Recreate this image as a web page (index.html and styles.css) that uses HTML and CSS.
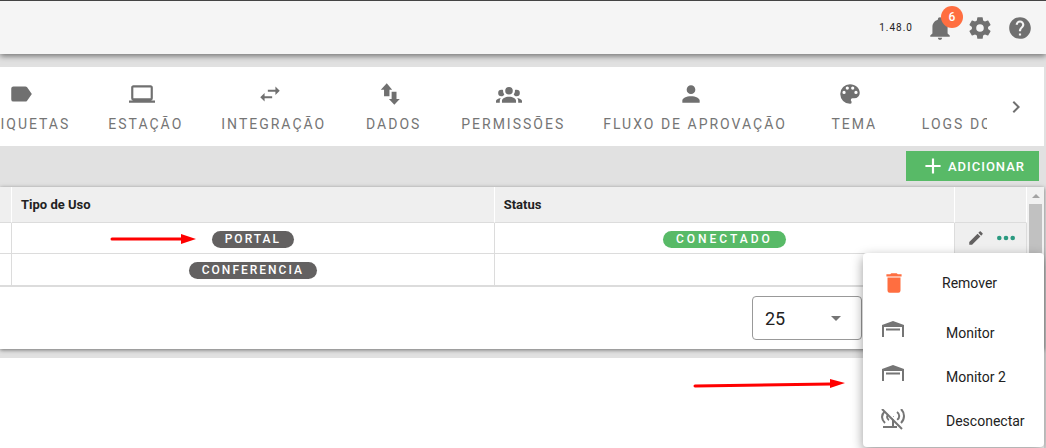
FILE: index.html
```html
<!DOCTYPE html>
<html lang="pt-BR">
<head>
    <meta charset="UTF-8">
    <meta name="viewport" content="width=device-width, initial-scale=1.0">
    <title>Configurações</title>
    <link rel="stylesheet" href="styles.css">
</head>
<body>
    <!-- Top bar -->
    <header class="topbar">
        <span class="version">1.48.0</span>
        <button class="icon-btn" aria-label="Notificações">
            <svg class="icon" viewBox="0 0 24 24"><path d="M21,19V20H3V19L5,17V11C5,7.9 7.03,5.17 10,4.29C10,4.19 10,4.1 10,4A2,2 0 0,1 12,2A2,2 0 0,1 14,4C14,4.1 14,4.19 14,4.29C16.97,5.17 19,7.9 19,11V17L21,19M14,21A2,2 0 0,1 12,23A2,2 0 0,1 10,21"/></svg>
            <span class="badge">6</span>
        </button>
        <button class="icon-btn" aria-label="Configurações">
            <svg class="icon" viewBox="0 0 24 24"><path d="M12,15.5A3.5,3.5 0 0,1 8.5,12A3.5,3.5 0 0,1 12,8.5A3.5,3.5 0 0,1 15.5,12A3.5,3.5 0 0,1 12,15.5M19.43,12.97C19.47,12.65 19.5,12.33 19.5,12C19.5,11.67 19.47,11.34 19.43,11L21.54,9.37C21.73,9.22 21.78,8.95 21.66,8.73L19.66,5.27C19.54,5.05 19.27,4.96 19.05,5.05L16.56,6.05C16.04,5.66 15.5,5.32 14.87,5.07L14.5,2.42C14.46,2.18 14.25,2 14,2H10C9.75,2 9.54,2.18 9.5,2.42L9.13,5.07C8.5,5.32 7.96,5.66 7.44,6.05L4.95,5.05C4.73,4.96 4.46,5.05 4.34,5.27L2.34,8.73C2.21,8.95 2.27,9.22 2.46,9.37L4.57,11C4.53,11.34 4.5,11.67 4.5,12C4.5,12.33 4.53,12.65 4.57,12.97L2.46,14.63C2.27,14.78 2.21,15.05 2.34,15.27L4.34,18.73C4.46,18.95 4.73,19.03 4.95,18.95L7.44,17.94C7.96,18.34 8.5,18.68 9.13,18.93L9.5,21.58C9.54,21.82 9.75,22 10,22H14C14.25,22 14.46,21.82 14.5,21.58L14.87,18.93C15.5,18.67 16.04,18.34 16.56,17.94L19.05,18.95C19.27,19.03 19.54,18.95 19.66,18.73L21.66,15.27C21.78,15.05 21.73,14.78 21.54,14.63L19.43,12.97Z"/></svg>
        </button>
        <button class="icon-btn" aria-label="Ajuda">
            <svg class="icon" viewBox="0 0 24 24"><path d="M15.07,11.25L14.17,12.17C13.45,12.89 13,13.5 13,15H11V14.5C11,13.39 11.45,12.39 12.17,11.67L13.41,10.41C13.78,10.05 14,9.55 14,9C14,7.89 13.1,7 12,7A2,2 0 0,0 10,9H8A4,4 0 0,1 12,5A4,4 0 0,1 16,9C16,9.88 15.64,10.67 15.07,11.25M13,19H11V17H13M12,2A10,10 0 0,0 2,12A10,10 0 0,0 12,22A10,10 0 0,0 22,12C22,6.47 17.5,2 12,2Z"/></svg>
        </button>
    </header>

    <main class="content">
        <!-- Tabs -->
        <nav class="tabs">
            <div class="tabs-view">
                <div class="tabs-track">
                    <button class="tab">
                        <svg class="icon" viewBox="0 0 24 24"><path d="M17.63,5.84C17.27,5.33 16.67,5 16,5H5A2,2 0 0,0 3,7V17A2,2 0 0,0 5,19H16C16.67,19 17.27,18.66 17.63,18.15L22,12L17.63,5.84Z"/></svg>
                        <span>ETIQUETAS</span>
                    </button>
                    <button class="tab">
                        <svg class="icon" viewBox="0 0 24 24"><path d="M4,6H20V16H4M20,18A2,2 0 0,0 22,16V6C22,4.89 21.1,4 20,4H4C2.89,4 2,4.89 2,6V16A2,2 0 0,0 4,18H0V20H24V18H20Z"/></svg>
                        <span>ESTAÇÃO</span>
                    </button>
                    <button class="tab">
                        <svg class="icon" viewBox="0 0 24 24"><path d="M21,9L17,5V8H10V10H17V13M7,11L3,15L7,19V16H14V14H7V11Z"/></svg>
                        <span>INTEGRAÇÃO</span>
                    </button>
                    <button class="tab">
                        <svg class="icon" viewBox="0 0 24 24"><path d="M9,2L3.500,8H6.500V14H11.500V8H14L9,2M13.500,10V16.500H11L16,22L21,16.500H18V10Z"/></svg>
                        <span>DADOS</span>
                    </button>
                    <button class="tab">
                        <svg class="icon" viewBox="0 0 24 24"><path d="M12,5.5A3.5,3.5 0 0,1 15.5,9A3.5,3.5 0 0,1 12,12.5A3.5,3.5 0 0,1 8.5,9A3.5,3.5 0 0,1 12,5.5M5,8C5.56,8 6.08,8.15 6.53,8.42C6.38,9.85 6.8,11.27 7.66,12.38C7.16,13.34 6.16,14 5,14A3,3 0 0,1 2,11A3,3 0 0,1 5,8M19,8A3,3 0 0,1 22,11A3,3 0 0,1 19,14C17.84,14 16.84,13.34 16.34,12.38C17.2,11.27 17.62,9.85 17.47,8.42C17.92,8.15 18.44,8 19,8M5.5,18.25C5.5,16.18 8.41,14.5 12,14.5C15.59,14.5 18.5,16.18 18.5,18.25V20H5.5V18.25M0,20V18.5C0,17.11 1.89,15.94 4.45,15.6C3.86,16.28 3.5,17.22 3.5,18.25V20H0M24,20H20.5V18.25C20.5,17.22 20.14,16.28 19.55,15.6C22.11,15.94 24,17.11 24,18.5V20Z"/></svg>
                        <span>PERMISSÕES</span>
                    </button>
                    <button class="tab">
                        <svg class="icon" viewBox="0 0 24 24"><path d="M12,4A4,4 0 0,1 16,8A4,4 0 0,1 12,12A4,4 0 0,1 8,8A4,4 0 0,1 12,4M12,14C16.42,14 20,15.79 20,18V20H4V18C4,15.79 7.58,14 12,14Z"/></svg>
                        <span>FLUXO DE APROVAÇÃO</span>
                    </button>
                    <button class="tab">
                        <svg class="icon" viewBox="0 0 24 24"><path d="M17.5,12A1.5,1.5 0 0,1 16,10.5A1.5,1.5 0 0,1 17.5,9A1.5,1.5 0 0,1 19,10.5A1.5,1.5 0 0,1 17.5,12M14.5,8A1.5,1.5 0 0,1 13,6.5A1.5,1.5 0 0,1 14.5,5A1.5,1.5 0 0,1 16,6.5A1.5,1.5 0 0,1 14.5,8M9.5,8A1.5,1.5 0 0,1 8,6.5A1.5,1.5 0 0,1 9.5,5A1.5,1.5 0 0,1 11,6.5A1.5,1.5 0 0,1 9.5,8M6.5,12A1.5,1.5 0 0,1 5,10.5A1.5,1.5 0 0,1 6.5,9A1.5,1.5 0 0,1 8,10.5A1.5,1.5 0 0,1 6.5,12M12,3A9,9 0 0,0 3,12A9,9 0 0,0 12,21A1.5,1.5 0 0,0 13.5,19.5C13.5,19.11 13.35,18.76 13.11,18.5C12.88,18.23 12.73,17.88 12.73,17.5A1.5,1.5 0 0,1 14.23,16H16A5,5 0 0,0 21,11C21,6.58 16.97,3 12,3Z"/></svg>
                        <span>TEMA</span>
                    </button>
                    <button class="tab">
                        <span>LOGS DO</span>
                    </button>
                </div>
            </div>
            <button class="tabs-next" aria-label="Próximo">
                <svg class="icon icon-md" viewBox="0 0 24 24"><path d="M8.59,16.58L13.17,12L8.59,7.41L10,6L16,12L10,18L8.59,16.58Z"/></svg>
            </button>
        </nav>

        <div class="toolbar">
            <button class="btn-add">
                <svg class="icon" viewBox="0 0 24 24"><path d="M19,13H13V19H11V13H5V11H11V5H13V11H19V13Z"/></svg>
                ADICIONAR
            </button>
        </div>

        <!-- Stations table -->
        <section class="panel">
            <div class="table-area">
                <table class="grid">
                    <colgroup>
                        <col class="col-first">
                        <col class="col-type">
                        <col>
                        <col class="col-actions">
                    </colgroup>
                    <thead>
                        <tr>
                            <th class="empty"></th>
                            <th>Tipo de Uso</th>
                            <th>Status</th>
                            <th class="empty"></th>
                        </tr>
                    </thead>
                    <tbody>
                        <tr>
                            <td></td>
                            <td><span class="chip">PORTAL</span></td>
                            <td><span class="chip chip-on">CONECTADO</span></td>
                            <td class="actions">
                                <div class="actions-row">
                                    <button class="icon-btn" aria-label="Editar">
                                        <svg class="icon icon-sm" viewBox="0 0 24 24"><path d="M20.71,7.04C21.1,6.65 21.1,6 20.71,5.63L18.37,3.29C18,2.9 17.35,2.9 16.96,3.29L15.12,5.12L18.87,8.87M3,17.25V21H6.75L17.81,9.93L14.06,6.18L3,17.25Z"/></svg>
                                    </button>
                                    <button class="icon-btn more" aria-label="Mais opções">
                                        <svg class="icon icon-sm" viewBox="0 0 18 18"><circle cx="2.300" cy="9" r="2.300"/><circle cx="9" cy="9" r="2.300"/><circle cx="15.700" cy="9" r="2.300"/></svg>
                                    </button>
                                </div>
                            </td>
                        </tr>
                        <tr>
                            <td></td>
                            <td><span class="chip">CONFERENCIA</span></td>
                            <td></td>
                            <td class="actions"></td>
                        </tr>
                    </tbody>
                </table>
                <div class="scrollbar">
                    <div class="scroll-up"></div>
                    <div class="scroll-thumb"></div>
                </div>

                <!-- Row menu -->
                <div class="menu">
                    <button class="menu-item menu-remove">
                        <svg class="icon" viewBox="0 0 24 24"><path d="M19,4H15.5L14.5,3H9.5L8.5,4H5V6H19M6,19A2,2 0 0,0 8,21H16A2,2 0 0,0 18,19V7H6V19Z"/></svg>
                        <span>Remover</span>
                    </button>
                    <button class="menu-item">
                        <svg class="icon icon-md" viewBox="0 0 24 24"><path d="M1,16V4L12,0L23,4V16H21V6H3V16ZM5,7.500H19V9.500H5Z"/></svg>
                        <span>Monitor</span>
                    </button>
                    <button class="menu-item">
                        <svg class="icon icon-md" viewBox="0 0 24 24"><path d="M1,16V4L12,0L23,4V16H21V6H3V16ZM5,7.500H19V9.500H5Z"/></svg>
                        <span>Monitor 2</span>
                    </button>
                    <button class="menu-item">
                        <svg class="icon icon-md icon-line" viewBox="0 0 24 24">
                            <path d="M4,2C0,6 0,10 4,14M8,4C5,7 6,10 8,11M20,0C24,4 24,10 20,14M16,3C19,5 19,9 16,11M12,7V17M2,18H16"/>
                            <path class="gap" d="M3,0L23,19"/>
                            <path d="M1,0L21,20"/>
                        </svg>
                        <span>Desconectar</span>
                    </button>
                </div>
            </div>

            <div class="pager">
                <div class="select-box">
                    <select aria-label="Itens por página">
                        <option>25</option>
                        <option>50</option>
                    </select>
                </div>
            </div>
        </section>

        <section class="panel-bottom"></section>
    </main>

    <!-- Red pointers -->
    <svg class="pointer pointer-type" viewBox="0 0 88 12"><path d="M2,6H74" /><polygon points="71,1 86,6 71,11"/></svg>
    <svg class="pointer pointer-menu" viewBox="0 0 154 12"><path d="M2,8L138,6" /><polygon points="137,1 152,5 137,10"/></svg>
</body>
</html>
```
FILE: styles.css
```css
/* Global Styles */
* {
    box-sizing: border-box;
}
body {
    display: flex;
    flex-direction: column;
    min-height: 100vh;
    margin: 0;
    font-family: Roboto, sans-serif;
    background-color: #e1e1e1;
    color: #222;
    position: relative;
}
button {
    font-family: inherit;
    border: none;
    background: none;
    padding: 0;
    cursor: pointer;
}
.icon {
    display: block;
    width: 26px;
    height: 26px;
    fill: #707070;
    flex: none;
}
.icon-md {
    width: 24px;
    height: 24px;
}
.icon-sm {
    width: 18px;
    height: 18px;
}
.icon-line {
    stroke: #757575;
    stroke-width: 2;
}
.icon-line .gap {
    stroke: #fff;
}

/* Top bar */
.topbar {
    display: flex;
    align-items: center;
    justify-content: flex-end;
    gap: 14px;
    height: 54px;
    padding-right: 13px;
    background-color: #f5f5f5;
    border-top: 1px solid #444;
    box-shadow: 0 2px 6px rgba(0, 0, 0, 0.5);
    z-index: 1;
}
.version {
    font-size: 10px;
    letter-spacing: 1px;
}
.icon-btn {
    position: relative;
}
.badge {
    position: absolute;
    top: -9px;
    right: -10px;
    width: 22px;
    height: 22px;
    border-radius: 50%;
    background-color: #ff6e40;
    color: #fff;
    font-size: 12px;
    font-weight: 500;
    line-height: 22px;
}

/* Tabs */
.content {
    display: flex;
    flex-direction: column;
    flex: 1;
    padding: 13px 2px 0 0;
}
.tabs {
    display: flex;
    height: 79px;
    background-color: #fff;
}
.tabs-view {
    flex: 1;
    min-width: 0;
    overflow: hidden;
}
.tabs-track {
    display: flex;
    height: 100%;
    margin-left: -39px; /* scrolled position */
}
.tab {
    display: flex;
    flex-direction: column;
    align-items: center;
    justify-content: flex-end;
    gap: 9px;
    flex: none;
    min-width: 97px;
    padding: 0 19px 14px;
    color: #757575;
    font-size: 14px;
    line-height: 16px;
    letter-spacing: 2px;
}
.tab .icon {
    margin-right: 8px;
}
.tabs-next {
    display: flex;
    align-items: center;
    justify-content: center;
    width: 57px;
}

.toolbar {
    display: flex;
    justify-content: flex-end;
    padding: 5px 5px 6px;
}
.btn-add {
    display: flex;
    align-items: center;
    gap: 2px;
    height: 30px;
    padding: 0 14px;
    background-color: #58ba67;
    color: #fff;
    font-size: 13px;
    font-weight: 500;
    letter-spacing: 1px;
}
.btn-add .icon {
    fill: #fff;
}

/* Table */
.panel {
    background-color: #fff;
    box-shadow: 0 1px 4px rgba(0, 0, 0, 0.5);
}
.table-area {
    display: flex;
    position: relative;
    border-bottom: 1px solid #dcdcdc;
}
.grid {
    flex: 1;
    table-layout: fixed;
    border-collapse: separate;
    border-spacing: 0;
}
.col-first {
    width: 12px;
}
.col-type {
    width: 47%;
}
.col-actions {
    width: 72px;
}
.grid th {
    height: 36px;
    padding: 0 9px;
    background-color: #efefef;
    border-right: 1px solid #fff;
    border-bottom: 1px solid #dcdcdc;
    font-size: 13px;
    font-weight: 700;
    text-align: left;
}
.grid th.empty {
    padding: 0;
}
.grid td {
    height: 31px;
    padding: 0;
    border-right: 1px solid #dcdcdc;
    border-bottom: 1px solid #dcdcdc;
    text-align: center;
}
.grid tr:last-child td {
    height: 32px;
}
.grid td.actions {
    background-color: #efefef;
}
.chip {
    display: inline-block;
    padding: 0 13px;
    border-radius: 9px;
    background-color: #636161;
    color: #fff;
    font-size: 12px;
    font-weight: 500;
    line-height: 17px;
    letter-spacing: 2px;
    vertical-align: middle;
}
.chip-on {
    background-color: #58ba67;
    letter-spacing: 3px;
}
.actions-row {
    display: flex;
    justify-content: center;
    gap: 12px;
}
.actions-row .icon {
    fill: #636161;
}
.actions-row .more .icon {
    fill: #2b9a80;
}
.scrollbar {
    display: flex;
    flex-direction: column;
    align-items: center;
    width: 17px;
    background-color: #f1f1f1;
}
.scroll-up {
    margin: 7px 0 6px;
    border: 4px solid transparent;
    border-top: none;
    border-bottom-color: #a3a3a3;
}
.scroll-thumb {
    flex: 1;
    width: 13px;
    background-color: #c1c1c1;
}

/* Row menu */
.menu {
    position: absolute;
    top: 66px;
    right: 0;
    z-index: 2;
    width: 181px;
    padding: 2px 0 4px;
    background-color: #fff;
    border-radius: 4px;
    box-shadow: 0 4px 12px rgba(0, 0, 0, 0.4);
}
.menu-item {
    display: flex;
    align-items: center;
    gap: 41px;
    width: 100%;
    height: 44px;
    padding-left: 18px;
    color: #222;
    font-size: 14px;
}
.menu-item .icon {
    fill: #757575;
}
.menu-item .icon-line {
    fill: none;
}
.menu-remove {
    height: 56px;
    gap: 35px;
}
.menu-remove .icon {
    fill: #ff6e40;
}

/* Pager */
.pager {
    display: flex;
    justify-content: flex-end;
    padding: 9px 182px;
}
.select-box {
    position: relative;
    width: 110px;
}
.select-box select {
    appearance: none;
    width: 100%;
    height: 44px;
    padding: 0 12px;
    border: 1px solid #999;
    border-radius: 4px;
    background-color: #fff;
    color: #222;
    font-family: inherit;
    font-size: 18px;
}
.select-box::after {
    content: "";
    position: absolute;
    top: 20px;
    right: 21px;
    border: 5px solid transparent;
    border-top-color: #757575;
    border-bottom: none;
}
.panel-bottom {
    flex: 1;
    margin-top: 9px;
    background-color: #fff;
}

/* Pointers */
.pointer {
    position: absolute;
    z-index: 3;
    height: 12px;
    fill: #f00;
    stroke: none;
}
.pointer path {
    stroke: #f00;
    stroke-width: 3;
    stroke-linecap: round;
}
.pointer-type {
    top: 233px;
    left: 110px;
    width: 88px;
}
.pointer-menu {
    top: 378px;
    left: 693px;
    width: 154px;
}
```
